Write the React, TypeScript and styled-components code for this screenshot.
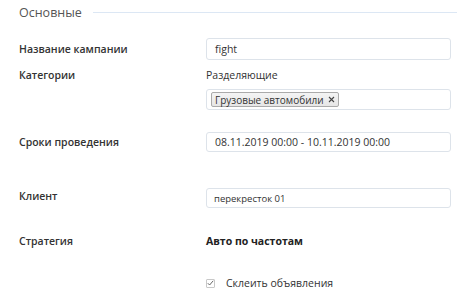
import styled, { createGlobalStyle } from "styled-components";

const Global = createGlobalStyle`
  html, body {
    margin: 0;
    padding: 0;
    background: #fff;
  }
  body {
    font-family: "Open Sans", "Liberation Sans", sans-serif;
    color: #333;
  }
`;

const Page = styled.div`
  width: 458px;
  height: 304px;
  padding: 0 1px 0 19px;
  box-sizing: border-box;
  overflow: hidden;
`;

const Legend = styled.div`
  display: flex;
  align-items: center;
  height: 24px;
  gap: 11px;
`;

const LegendTitle = styled.span`
  font-size: 12.5px;
  color: #555;
`;

const LegendLine = styled.div`
  flex: 1;
  height: 1px;
  background: #dce7f4;
`;

const Row = styled.div<{ top: number; align?: string }>`
  display: grid;
  grid-template-columns: 187px 245px;
  align-items: ${(p) => p.align || "center"};
  margin-top: ${(p) => p.top}px;
`;

const Label = styled.div<{ shift?: number }>`
  font-size: 10.5px;
  font-weight: 600;
  color: #333;
  line-height: 16px;
  margin-top: ${(p) => p.shift || 0}px;
`;

const Field = styled.div`
  display: flex;
  flex-direction: column;
  gap: 6px;
`;

const SubLabel = styled.div`
  font-size: 10.5px;
  line-height: 16px;
  color: #333;
`;

const Input = styled.div<{ small?: boolean; h?: number }>`
  height: ${(p) => p.h || 20}px;
  box-sizing: border-box;
  border: 1px solid #dde3ea;
  border-radius: 3px;
  display: flex;
  align-items: center;
  padding: 0 ${(p) => (p.small ? 7 : 8)}px;
  font-size: ${(p) => (p.small ? 9.5 : 10.5)}px;
  color: #333;
  white-space: nowrap;
`;

const TagBox = styled(Input)`
  padding: 0 4px;
`;

const Tag = styled.span`
  display: inline-flex;
  align-items: center;
  gap: 4px;
  height: 15px;
  box-sizing: border-box;
  padding: 0 3px;
  border: 1px solid #aaa;
  border-radius: 2px;
  background: linear-gradient(#f4f4f4, #e6e6e6);
  font-size: 10px;
  color: #333;
`;

const Strong = styled.div`
  font-size: 10.5px;
  font-weight: 700;
  line-height: 16px;
  color: #222;
`;

const Check = styled.label`
  display: flex;
  align-items: center;
  gap: 11px;
  font-size: 10.5px;
  line-height: 16px;
  color: #333;
`;

const Box = styled.span`
  width: 9px;
  height: 9px;
  box-sizing: border-box;
  border: 1px solid #c8c8c8;
  border-radius: 1px;
  display: flex;
  align-items: center;
  justify-content: center;
`;

export default function App() {
  return (
    <Page>
      <Global />
      <Legend>
        <LegendTitle>Основные</LegendTitle>
        <LegendLine />
      </Legend>

      <Row top={14}>
        <Label>Название кампании</Label>
        <Input h={22}>fight</Input>
      </Row>

      <Row top={7} align="start">
        <Label>Категории</Label>
        <Field>
          <SubLabel>Разделяющие</SubLabel>
          <TagBox h={21}>
            <Tag>
              Грузовые автомобили
              <svg width="7" height="7" viewBox="0 0 7 7">
                <path d="M1 1L6 6M6 1L1 6" stroke="#444" strokeWidth="1.1" />
              </svg>
            </Tag>
          </TagBox>
        </Field>
      </Row>

      <Row top={22}>
        <Label>Сроки проведения</Label>
        <Input>08.11.2019 00:00 - 10.11.2019 00:00</Input>
      </Row>

      <Row top={36}>
        <Label shift={-4}>Клиент</Label>
        <Input small>перекресток 01</Input>
      </Row>

      <Row top={25}>
        <Label>Стратегия</Label>
        <Strong>Авто по частотам</Strong>
      </Row>

      <Row top={26}>
        <span />
        <Check>
          <Box>
            <svg width="7" height="6" viewBox="0 0 7 6">
              <path d="M0.8 3.2L2.6 5L6.2 0.8" stroke="#666" strokeWidth="1" fill="none" />
            </svg>
          </Box>
          Склеить объявления
        </Check>
      </Row>
    </Page>
  );
}
